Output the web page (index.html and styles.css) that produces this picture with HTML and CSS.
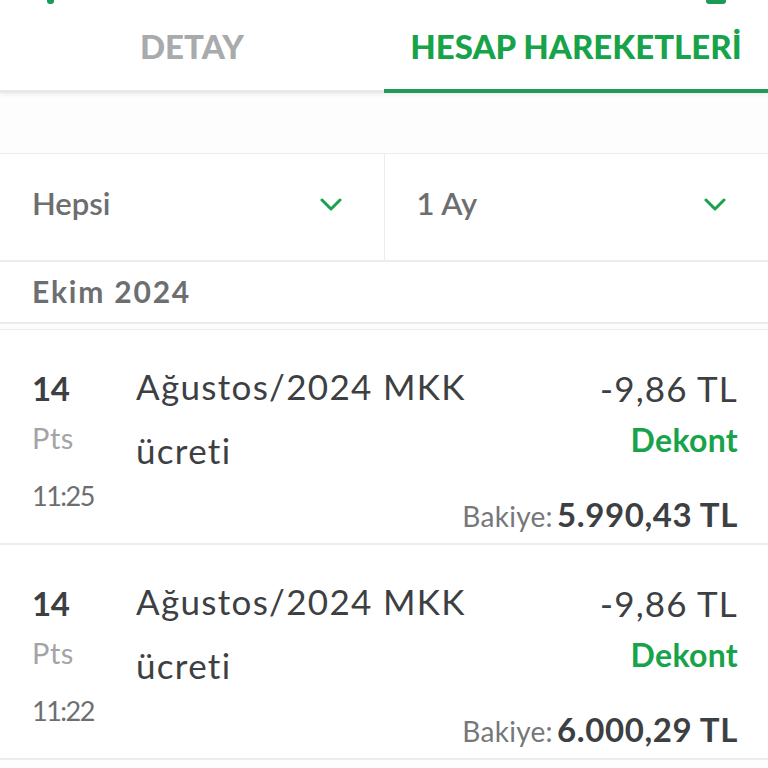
FILE: index.html
```html
<!DOCTYPE html>
<html lang="tr">
<head>
<meta charset="utf-8">
<title>Hesap Hareketleri</title>
<link rel="stylesheet" href="styles.css">
</head>
<body>
<div class="page">
  <div class="peek peek-left"></div>
  <div class="peek peek-right"></div>
  <nav class="tabs">
    <div class="tab">DETAY</div>
    <div class="tab active">HESAP HAREKETLERİ</div>
  </nav>
  <div class="spacer"></div>
  <div class="filters">
    <div class="filter">
      <span>Hepsi</span>
      <svg class="chev" width="22" height="14" viewBox="0 0 22 14"><path d="M2 2 L11 11 L20 2" fill="none" stroke="#17a34a" stroke-width="3" stroke-linecap="round" stroke-linejoin="round"/></svg>
    </div>
    <div class="filter">
      <span>1 Ay</span>
      <svg class="chev" width="22" height="14" viewBox="0 0 22 14"><path d="M2 2 L11 11 L20 2" fill="none" stroke="#17a34a" stroke-width="3" stroke-linecap="round" stroke-linejoin="round"/></svg>
    </div>
  </div>
  <div class="month">Ekim 2024</div>
  <div class="list">
    <div class="row">
      <div class="date">
        <div class="day">14</div>
        <div class="wd">Pts</div>
        <div class="time">11:25</div>
      </div>
      <div class="desc">Ağustos/2024 MKK ücreti</div>
      <div class="amounts">
        <div class="amount">-9,86 TL</div>
        <div class="dekont">Dekont</div>
        <div class="balance"><span class="blabel">Bakiye:</span> <span class="bval">5.990,43 TL</span></div>
      </div>
    </div>
    <div class="row">
      <div class="date">
        <div class="day">14</div>
        <div class="wd">Pts</div>
        <div class="time">11:22</div>
      </div>
      <div class="desc">Ağustos/2024 MKK ücreti</div>
      <div class="amounts">
        <div class="amount">-9,86 TL</div>
        <div class="dekont">Dekont</div>
        <div class="balance"><span class="blabel">Bakiye:</span> <span class="bval">6.000,29 TL</span></div>
      </div>
    </div>
  </div>
</div>
</body>
</html>
```
FILE: styles.css
```css
* { box-sizing: border-box; }
html, body { margin: 0; padding: 0; background: #fdfdfd; }
body { font-family: Lato, "Noto Sans", sans-serif; color: #3d4043; }
.page { position: relative; width: 768px; height: 768px; overflow: hidden; }

.peek { position: absolute; top: 0; height: 4px; background: #1c9a55; border-radius: 0 0 3px 3px; }
.peek-left { left: 47px; width: 7px; }
.peek-right { left: 706px; width: 20px; }

.tabs { display: flex; height: 93px; background: #fff; box-shadow: 0 2px 4px rgba(0,0,0,0.06); }
.tab { flex: 1 1 0; display: flex; align-items: center; justify-content: center; padding-top: 2px;
  font-weight: 900; font-size: 33px; color: #a9aaab; letter-spacing: 0;
  border-bottom: 3px solid #e9e9e9; }
.tab.active { color: #17a34a; border-bottom: 4px solid #249a58; }

.spacer { height: 60px; }

.filters { display: flex; height: 109px; background: #fff; border-top: 1px solid #ececec; border-bottom: 2px solid #ececec; }
.filter { flex: 1 1 0; display: flex; align-items: center; justify-content: space-between; padding: 0 42px 8px 32px; font-size: 31px; color: #6d6e70; font-weight: 600; }
.filter + .filter { border-left: 1px solid #ececec; }
.chev { display: block; margin-top: 4px; }

.month { height: 62px; background: #fff; display: flex; align-items: center; padding: 0 32px 2px; font-size: 30px; font-weight: 700; letter-spacing: 1.8px; color: #6d6e70; border-bottom: 2px solid #ececec; }

.list { margin-top: 5px; border-top: 1px solid #ececec; background: #fff; }
.row { display: flex; height: 215px; padding: 24px 30px 0 32px; border-bottom: 2px solid #ececec; }
.date { width: 104px; padding-top: 14px; flex: none; }
.day { font-size: 33px; font-weight: 700; line-height: 40px; color: #3d4043; letter-spacing: -0.5px; }
.wd { font-size: 29px; line-height: 40px; margin-top: 10px; color: #a3a4a6; letter-spacing: 0.5px; }
.time { font-size: 27px; line-height: 40px; margin-top: 18px; color: #6d6e70; letter-spacing: -1.5px; }
.desc { width: 350px; flex: none; font-size: 35px; line-height: 64px; color: #3d4043; letter-spacing: 1.3px; }
.amounts { flex: 1 1 0; min-width: 0; display: flex; flex-direction: column; align-items: flex-end; padding-top: 14px; }
.amount { font-size: 35px; line-height: 40px; color: #3d4043; white-space: nowrap; letter-spacing: 1.2px; }
.dekont { font-size: 32px; line-height: 40px; margin-top: 12px; color: #17a34a; font-weight: 700; letter-spacing: 0.3px; }
.balance { flex: none; margin-top: 34px; line-height: 40px; white-space: nowrap; }
.blabel { font-size: 28px; color: #76777a; letter-spacing: 0.3px; }
.bval { font-size: 33px; font-weight: 700; color: #3d4043; letter-spacing: 0.6px; }
```
